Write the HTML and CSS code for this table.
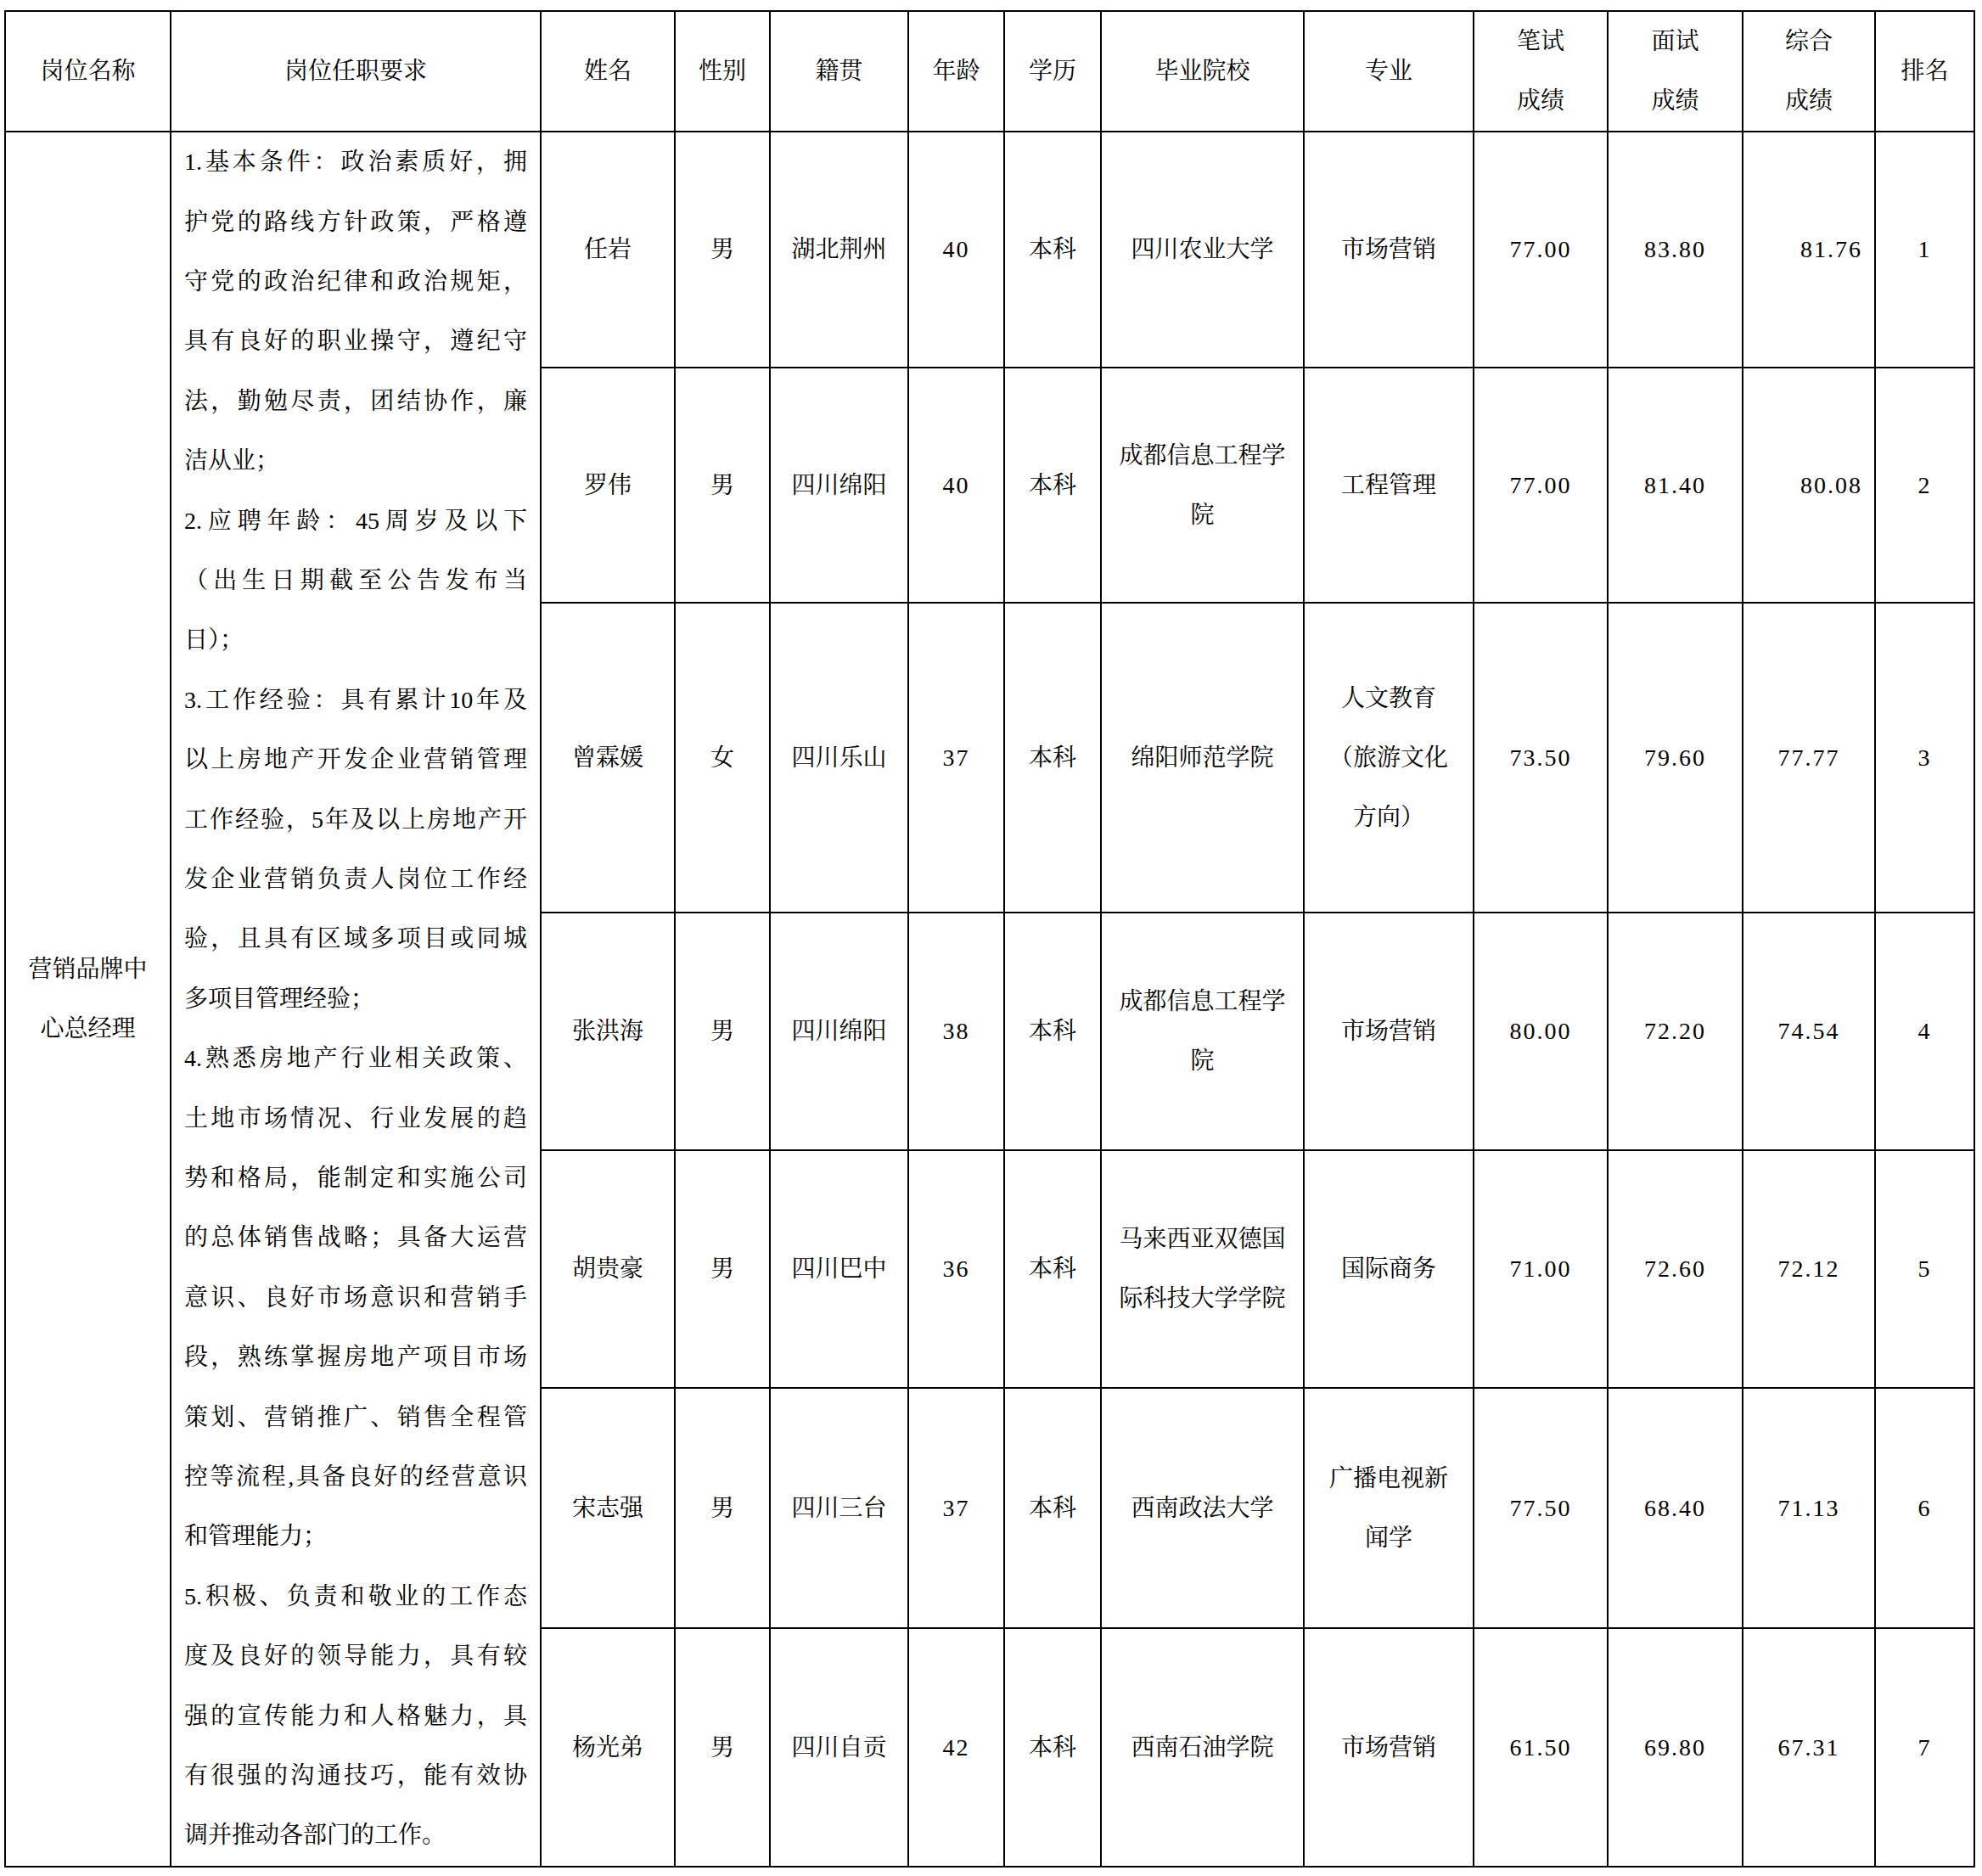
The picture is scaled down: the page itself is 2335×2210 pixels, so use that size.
FILE: index.html
```html
<!DOCTYPE html>
<html lang="zh-CN">
<head>
<meta charset="utf-8">
<title>营销品牌中心总经理 成绩</title>
<link rel="stylesheet" href="styles.css">
</head>
<body>
<table class="grid">
  <colgroup>
    <col class="c-post"><col class="c-req"><col class="c-name"><col class="c-sex"><col class="c-home"><col class="c-age"><col class="c-edu"><col class="c-school"><col class="c-major"><col class="c-s1"><col class="c-s2"><col class="c-s3"><col class="c-rank">
  </colgroup>
  <tr class="r-head">
    <th>岗位名称</th>
    <th>岗位任职要求</th>
    <th>姓名</th>
    <th>性别</th>
    <th>籍贯</th>
    <th>年龄</th>
    <th>学历</th>
    <th>毕业院校</th>
    <th>专业</th>
    <th>笔试<br>成绩</th>
    <th>面试<br>成绩</th>
    <th>综合<br>成绩</th>
    <th>排名</th>
  </tr>
  <tr class="r1">
    <td rowspan="7">营销品牌中<br>心总经理</td>
    <td rowspan="7" class="req">
      <span class="ln">1.基本条件：政治素质好，拥</span>
      <span class="ln">护党的路线方针政策，严格遵</span>
      <span class="ln">守党的政治纪律和政治规矩，</span>
      <span class="ln">具有良好的职业操守，遵纪守</span>
      <span class="ln">法，勤勉尽责，团结协作，廉</span>
      <span class="ln end">洁从业；</span>
      <span class="ln">2.应聘年龄：45周岁及以下</span>
      <span class="ln">（出生日期截至公告发布当</span>
      <span class="ln end">日）；</span>
      <span class="ln">3.工作经验：具有累计10年及</span>
      <span class="ln">以上房地产开发企业营销管理</span>
      <span class="ln">工作经验，5年及以上房地产开</span>
      <span class="ln">发企业营销负责人岗位工作经</span>
      <span class="ln">验，且具有区域多项目或同城</span>
      <span class="ln end">多项目管理经验；</span>
      <span class="ln">4.熟悉房地产行业相关政策、</span>
      <span class="ln">土地市场情况、行业发展的趋</span>
      <span class="ln">势和格局，能制定和实施公司</span>
      <span class="ln">的总体销售战略；具备大运营</span>
      <span class="ln">意识、良好市场意识和营销手</span>
      <span class="ln">段，熟练掌握房地产项目市场</span>
      <span class="ln">策划、营销推广、销售全程管</span>
      <span class="ln">控等流程,具备良好的经营意识</span>
      <span class="ln end">和管理能力；</span>
      <span class="ln">5.积极、负责和敬业的工作态</span>
      <span class="ln">度及良好的领导能力，具有较</span>
      <span class="ln">强的宣传能力和人格魅力，具</span>
      <span class="ln">有很强的沟通技巧，能有效协</span>
      <span class="ln end">调并推动各部门的工作。</span>
    </td>
    <td>任岩</td><td>男</td><td>湖北荆州</td><td class="num">40</td><td>本科</td><td>四川农业大学</td><td>市场营销</td>
    <td class="num">77.00</td><td class="num">83.80</td><td class="num right">81.76</td><td class="num">1</td>
  </tr>
  <tr class="r2">
    <td>罗伟</td><td>男</td><td>四川绵阳</td><td class="num">40</td><td>本科</td><td>成都信息工程学<br>院</td><td>工程管理</td>
    <td class="num">77.00</td><td class="num">81.40</td><td class="num right">80.08</td><td class="num">2</td>
  </tr>
  <tr class="r3">
    <td>曾霖媛</td><td>女</td><td>四川乐山</td><td class="num">37</td><td>本科</td><td>绵阳师范学院</td><td>人文教育<br>（旅游文化<br>方向）</td>
    <td class="num">73.50</td><td class="num">79.60</td><td class="num">77.77</td><td class="num">3</td>
  </tr>
  <tr class="r4">
    <td>张洪海</td><td>男</td><td>四川绵阳</td><td class="num">38</td><td>本科</td><td>成都信息工程学<br>院</td><td>市场营销</td>
    <td class="num">80.00</td><td class="num">72.20</td><td class="num">74.54</td><td class="num">4</td>
  </tr>
  <tr class="r5">
    <td>胡贵豪</td><td>男</td><td>四川巴中</td><td class="num">36</td><td>本科</td><td>马来西亚双德国<br>际科技大学学院</td><td>国际商务</td>
    <td class="num">71.00</td><td class="num">72.60</td><td class="num">72.12</td><td class="num">5</td>
  </tr>
  <tr class="r6">
    <td>宋志强</td><td>男</td><td>四川三台</td><td class="num">37</td><td>本科</td><td>西南政法大学</td><td>广播电视新<br>闻学</td>
    <td class="num">77.50</td><td class="num">68.40</td><td class="num">71.13</td><td class="num">6</td>
  </tr>
  <tr class="r7">
    <td>杨光弟</td><td>男</td><td>四川自贡</td><td class="num">42</td><td>本科</td><td>西南石油学院</td><td>市场营销</td>
    <td class="num">61.50</td><td class="num">69.80</td><td class="num">67.31</td><td class="num">7</td>
  </tr>
</table>
</body>
</html>
```
FILE: styles.css
```css
html, body {
  background: #ffffff;
}
body {
  margin: 0;
  padding: 12px 0 0 5px;
}
.grid {
  border-collapse: collapse;
  table-layout: fixed;
  width: 2322px;
  font-family: "Liberation Serif", "Noto Serif CJK SC", "Noto Sans CJK SC", serif;
  font-size: 28px;
  color: #000000;
}
.grid th,
.grid td {
  border: 2px solid #000000;
  padding: 0 8px;
  text-align: center;
  vertical-align: middle;
  line-height: 70px;
  font-weight: normal;
}
.c-post { width: 195px; }
.c-req { width: 436px; }
.c-name { width: 158px; }
.c-sex { width: 112px; }
.c-home { width: 163px; }
.c-age { width: 113px; }
.c-edu { width: 114px; }
.c-school { width: 239px; }
.c-major { width: 200px; }
.c-s1 { width: 158px; }
.c-s2 { width: 159px; }
.c-s3 { width: 156px; }
.c-rank { width: 117px; }

.r-head { height: 142px; }
.r1 { height: 278px; }
.r2 { height: 277px; }
.r3 { height: 365px; }
.r4 { height: 280px; }
.r5 { height: 280px; }
.r6 { height: 283px; }
.r7 { height: 281px; }

.grid td.req {
  padding: 0 15px;
  line-height: 70.4px;
}
.ln {
  display: block;
  text-align: justify;
  text-align-last: justify;
  white-space: nowrap;
}
.ln.end {
  text-align-last: left;
}
.num {
  letter-spacing: 2px;
}
.grid td.right {
  text-align: right;
  padding-right: 14px;
}
```
